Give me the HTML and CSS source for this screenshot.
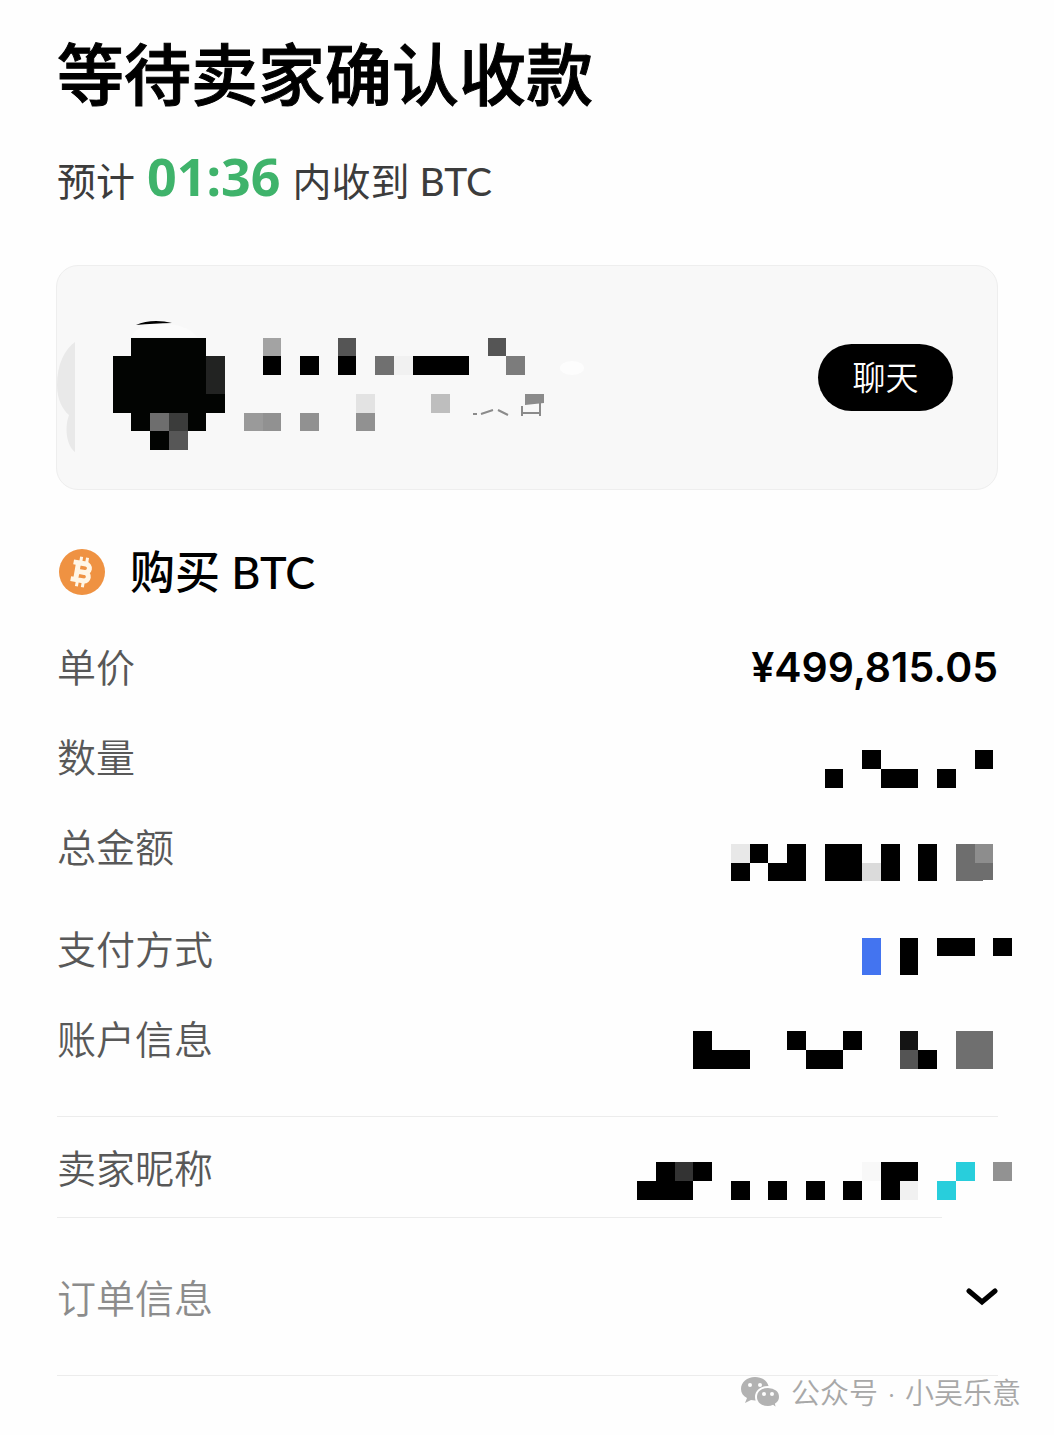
FILE: index.html
```html
<!DOCTYPE html>
<html lang="zh-CN">
<head>
    <meta charset="UTF-8">
    <meta name="viewport" content="width=device-width, initial-scale=1.0">
    <title>等待卖家确认收款</title>
    <link rel="stylesheet" href="styles.css">
</head>
<body>
    <main class="order-page">
        <h1>等待卖家确认收款</h1>
        <p class="estimate">预计 <span class="countdown">01:36</span> 内收到 BTC</p>

        <section class="seller-card">
            <!-- Pixelated avatar and seller name, one unit per mosaic cell -->
            <svg class="seller-mosaic" viewBox="0 0 560 223" aria-hidden="true">
                <path fill="#e9e9e9" d="M18 76C8 83 0 98 0 119c0 15 6 25 12 30-5 14-2 31 6 37z"/>
                <path fill="#fbfbfb" d="M74 71c4-8 12-12 24-13 20-1 34 3 42 13z"/>
                <path d="M79 59c10-5 25-5 36-2-12 0-24 1-36 2z"/>
                <ellipse cx="515" cy="102" rx="12" ry="7" fill="#fdfdfd"/>
                <g transform="translate(-57 -266) scale(18.75)" shape-rendering="crispEdges">
                    <path fill="#020402" d="M7 18h4v1h1v3h-1v1h-1v1H8v-1H7v-1H6v-3h1z"/>
                    <path fill="#222322" d="M11 19h1v2h-1z"/>
                    <path fill="#6e6e6e" d="M8 22h1v1H8z"/>
                    <path fill="#3b3c3b" d="M9 22h1v1H9z"/>
                    <path fill="#575757" d="M9 23h1v1H9z"/>
                    <path fill="#a3a3a3" d="M14 18h1v1h-1z"/>
                    <path fill="#555" d="M18 18h1v1h-1zM26 18h1v1h-1z"/>
                    <path d="M14 19h1v1h-1zM16 19h1v1h-1zM18 19h1v1h-1zM22 19h3v1h-3z"/>
                    <path fill="#707070" d="M20 19h1v1h-1z"/>
                    <path fill="#f1f1f1" d="M21 19h1v1h-1z"/>
                    <path fill="#7c7c7c" d="M27 19h1v1h-1z"/>
                    <path fill="#e3e3e3" d="M19 21h1v1h-1z"/>
                    <path fill="#bebebe" d="M23 21h1v1h-1z"/>
                    <path fill="#9a9a9a" d="M13 22h1v1h-1z"/>
                    <path fill="#919191" d="M14 22h1v1h-1zM16 22h1v1h-1zM19 22h1v1h-1z"/>
                </g>
                <path fill="#8b8b8b" d="M468 128h19v9l-19 2z"/>
                <path fill="none" stroke="#8b8b8b" stroke-width="2" d="M416 148h4M424 148l12-4M441 144l10 5M465 140v10M483 137v13M465 147h18"/>
            </svg>
            <button type="button" class="chat-button">聊天</button>
        </section>

        <h2>
            <svg class="coin" viewBox="0 0 46 46" aria-hidden="true">
                <circle cx="23" cy="23" r="23" fill="#ef9242"/>
                <g transform="rotate(10 23 23)" fill="none" stroke="#fff6e6">
                    <path stroke-width="5" d="M18 14v18M13 14.500h12.500a4 4 0 0 1 0 8.500H18M25.500 23h1a4.300 4.300 0 0 1 0 8.500H13"/>
                    <path stroke-width="3" d="M20 8v6M26 8v6M20 32v6M26 32v6"/>
                </g>
            </svg>
            购买 BTC
        </h2>

        <section class="details">
            <dl>
                <div class="row">
                    <dt>单价</dt>
                    <dd>¥499,815.05</dd>
                </div>
                <div class="row">
                    <dt>数量</dt>
                </div>
                <div class="row">
                    <dt>总金额</dt>
                </div>
            </dl>
            <dl>
                <div class="row">
                    <dt>支付方式</dt>
                </div>
                <div class="row">
                    <dt>账户信息</dt>
                </div>
            </dl>
            <svg class="mosaic details-mosaic" viewBox="34 40 20 17" shape-rendering="crispEdges" aria-hidden="true">
                <!-- quantity -->
                <path d="M44 41h1v1h-1zM46 40h1v1h-1zM47 41h2v1h-2zM50 41h1v1h-1zM52 40h1v1h-1z"/>
                <!-- total -->
                <path fill="#e8e8e8" d="M39 45h1v1h-1z"/>
                <path d="M40 45h1v1h-1zM39 46h1v1h-1zM42 45h1v2h-2v-1h1zM44 45h2v2h-2zM47 45h1v2h-1zM49 45h1v2h-1z"/>
                <path fill="#dbdbdb" d="M46 46h1v1h-1z"/>
                <path fill="#6e6e6e" d="M51 45h2v1.9l-1 .1h-1z"/>
                <path fill="#8d8d8d" d="M52 45h1v1h-1z"/>
                <!-- payment -->
                <path fill="#4374f0" d="M46 50h1v2h-1z"/>
                <path d="M48 50h1v2h-1zM50 50h2v1h-2zM53 50h1v1h-1z"/>
                <!-- account -->
                <path d="M37 55h1v1h2v1h-3zM42 55h1v1h-1zM43 56h2v1h-2zM45 55h1v1h-1zM49 56h1v1h-1z"/>
                <path fill="#141414" d="M48 55h1v1h-1z"/>
                <path fill="#545454" d="M48 56h1v1h-1z"/>
                <path fill="#6f6f6f" d="M51 55h2v2h-2z"/>
            </svg>
        </section>

        <dl class="nickname">
            <div class="row">
                <dt>卖家昵称</dt>
                <dd class="nickname-value">
                    <svg class="mosaic" viewBox="34 62 20 2" shape-rendering="crispEdges" aria-hidden="true">
                        <path d="M35 62h3v1h-1v1h-3v-1h1zM39 63h1v1h-1zM41 63h1v1h-1zM43 63h1v1h-1zM45 63h1v1h-1zM47 62h2v1h-1v1h-1z"/>
                        <path fill="#333" d="M36 62h1v1h-1z"/>
                        <path fill="#f8f8f8" d="M46 62h1v1h-1z"/>
                        <path fill="#f1f1f1" d="M48 63h1v1h-1z"/>
                        <path fill="#28cedc" d="M51 62h1v1h-1zM50 63h1v1h-1z"/>
                        <path fill="#929292" d="M53 62h1v1h-1z"/>
                    </svg>
                </dd>
            </div>
        </dl>
        <hr class="short-rule">

        <button type="button" class="order-toggle" aria-expanded="false">
            订单信息
            <svg class="chevron" viewBox="0 0 32 20" aria-hidden="true">
                <path d="M3 5l13 11L29 5" fill="none" stroke="#000" stroke-width="5" stroke-linecap="round"/>
            </svg>
        </button>
    </main>

    <footer class="account">
        <svg class="wechat" viewBox="0 0 40 33" aria-hidden="true">
            <path fill="#b2b2b2" d="M14 0C6 0 0 5 0 12c0 4 2 7 6 9l-2 5 6-3c9 2 18-3 18-11C28 5 22 0 14 0z"/>
            <path fill="#b2b2b2" stroke="#fefefe" stroke-width="2" d="M27 10c-7 0-12 4-12 10s5 10 12 10c2 0 3 0 5-1l4 3-1-5c3-2 4-4 4-7 0-6-5-10-12-10z"/>
            <g fill="#fefefe">
                <circle cx="9" cy="8" r="2"/>
                <circle cx="19" cy="8" r="2"/>
                <circle cx="23" cy="17" r="2"/>
                <circle cx="31" cy="17" r="2"/>
            </g>
        </svg>
        <span>公众号</span>
        <span>·</span>
        <span>小吴乐意</span>
    </footer>
</body>
</html>
```

FILE: styles.css
```css
* {
    box-sizing: border-box;
}

body {
    margin: 0;
    background-color: #fefefe;
    color: #000;
    font-family: Lato, 'Noto Sans CJK SC', sans-serif;
}

button {
    border: none;
    font-family: inherit;
    cursor: pointer;
}

.order-page {
    padding: 34px 56px 0 57px;
}

h1 {
    margin: 0;
    font-size: 67px;
    font-weight: 500;
    line-height: 80px;
    -webkit-text-stroke: 1px #000;
}

.estimate {
    margin: 36px 0 0;
    color: #3c3c3c;
    font-size: 39px;
    line-height: 60px;
}
.countdown {
    margin: 0 2px;
    color: #3fb36b;
    font-family: 'Noto Sans', sans-serif;
    font-size: 52px;
    font-weight: 700;
    line-height: 52px;
}

/* Seller card */
.seller-card {
    display: flex;
    align-items: center;
    justify-content: space-between;
    margin: 54px 0 0 -1px;
    padding-right: 44px;
    border: 1px solid #eee;
    border-radius: 22px;
    background-color: #f8f8f8;
    overflow: hidden;
}
.seller-mosaic {
    width: 560px;
    height: 223px;
}
.chat-button {
    width: 135px;
    height: 67px;
    padding: 0 0 4px;
    border-radius: 34px;
    background-color: #000;
    color: #fff;
    font-size: 33px;
    font-weight: 350;
}

h2 {
    display: flex;
    align-items: center;
    gap: 25px;
    margin: 52px 0 18px;
    font-size: 45px;
    font-weight: 500;
    line-height: 60px;
}
.coin {
    width: 46px;
    height: 46px;
    margin-left: 2px;
}

/* Order details */
.details {
    position: relative;
    padding-bottom: 34px;
    border-bottom: 1px solid #ececec;
}
dl,
dd {
    margin: 0;
}
.details dl + dl {
    margin-top: 12px;
}
.row {
    display: flex;
    align-items: center;
    justify-content: space-between;
    height: 90px;
}
dt {
    color: #585858;
    font-size: 39px;
    font-weight: 350;
}
dd {
    padding-top: 4px;
    font-family: Inter, sans-serif;
    font-size: 41px;
    font-weight: 600;
}

.mosaic {
    display: block;
    width: 375px;
}
.details-mosaic {
    position: absolute;
    top: 130px;
    right: -14px;
    height: 319px;
}

.nickname .row {
    height: 100px;
    padding-bottom: 2px;
}
.nickname-value {
    margin-right: -14px;
    padding-top: 30px;
}
.short-rule {
    width: 94%;
    height: 1px;
    margin: 0;
    border: none;
    background-color: #ececec;
}

.order-toggle {
    display: flex;
    align-items: center;
    justify-content: space-between;
    width: 100%;
    height: 158px;
    padding: 0 0 2px;
    border-bottom: 1px solid #ececec;
    background: none;
    color: #8c8c8c;
    font-size: 39px;
    font-weight: 350;
}
.chevron {
    width: 32px;
    height: 20px;
}

.account {
    display: flex;
    align-items: center;
    justify-content: flex-end;
    gap: 10px;
    padding-right: 33px;
    color: #a8a8a8;
    font-size: 29px;
    font-weight: 350;
    line-height: 34px;
}
.wechat {
    width: 40px;
    height: 33px;
}
```
